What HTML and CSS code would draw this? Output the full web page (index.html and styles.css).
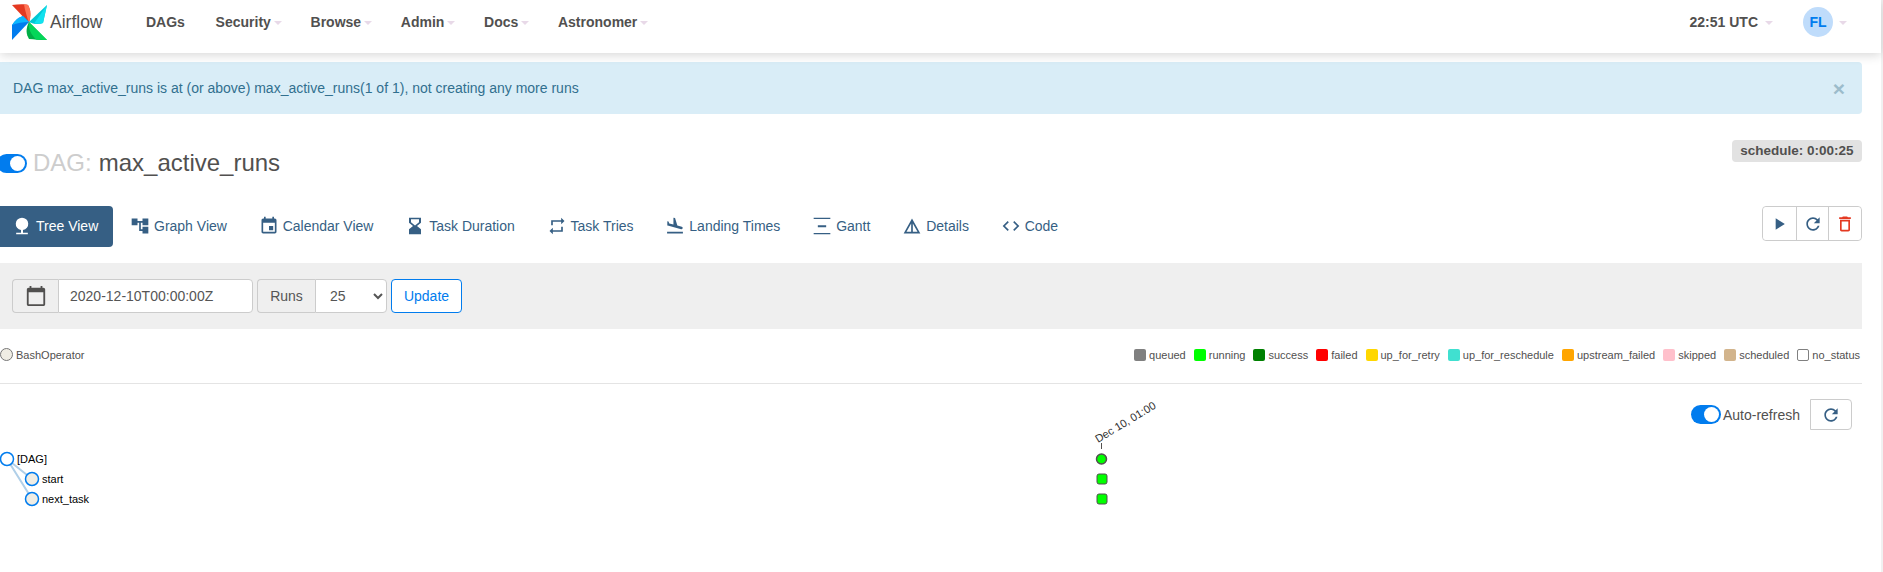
FILE: index.html
```html
<!DOCTYPE html>
<html lang="en">
<head>
<meta charset="utf-8">
<title>max_active_runs - Tree - Airflow</title>
<link rel="stylesheet" href="styles.css">
</head>
<body>
<div class="page">
  <nav class="nav">
    <a class="brand">
      <svg class="logo" viewBox="0 0 36 36" aria-hidden="true">
        <path fill="#e43921" d="M0 1 C6 0 14 0 16 1 C19 6 19 12 17 19 Z"/>
        <path fill="#ff7557" d="M12 .6 C14 .6 15 .7 16 1 C19 6 19 12 17 19 C15 13 13 7 12 .6 Z"/>
        <path fill="#00c7d4" d="M35 1 L31 19 C26 21 21 20 17 18 Z"/>
        <path fill="#11e1ee" d="M35 1 L31 19 C28 20 25 20 22 19.500 Z"/>
        <path fill="#00ad46" d="M35 36 C28 36 22 35.500 17 35 C14 30 13.500 25 17 18 Z"/>
        <path fill="#04d659" d="M35 36 C31 36 27 35.800 24 35.500 C19 30 16 25 17 18 Z"/>
        <path fill="#017cee" d="M0 36 L0 21 C3 16 7 13 11 12 C13 14 15 16 17 18 Z"/>
        <path fill="#0cb6ff" d="M0 21 C3 16 7 13 11 12 C13 14 15 16 17 18 C11 18 5 19 0 21 Z"/>
      </svg>
      <span class="brand-name">Airflow</span>
    </a>
    <ul class="menu">
      <li class="menu-item menu-first">DAGs</li>
      <li class="menu-item">Security<i class="caret"></i></li>
      <li class="menu-item">Browse<i class="caret"></i></li>
      <li class="menu-item">Admin<i class="caret"></i></li>
      <li class="menu-item">Docs<i class="caret"></i></li>
      <li class="menu-item">Astronomer<i class="caret"></i></li>
    </ul>
    <div class="nav-right">
      <span class="clock">22:51 UTC<i class="caret caret-wide"></i></span>
      <span class="user"><span class="avatar">FL</span><i class="caret caret-wide"></i></span>
    </div>
  </nav>

  <main class="content">
    <div class="alert">
      <span>DAG max_active_runs is at (or above) max_active_runs(1 of 1), not creating any more runs</span>
      <span class="alert-close">×</span>
    </div>

    <div class="title-row">
      <h4 class="title">
        <span class="switch"></span>
        <span class="title-label">DAG:</span>
        <span>max_active_runs</span>
      </h4>
      <span class="schedule">schedule: 0:00:25</span>
    </div>

    <div class="tabs-row">
      <div class="tabs">
        <a class="tab tab-active"><svg class="icon" viewBox="0 0 24 24"><path d="M12 2a7.5 7.5 0 0 0-1.2 14.9V20H5v2h14v-2h-5.800v-3.100A7.500 7.500 0 0 0 12 2z"/></svg>Tree View</a>
        <a class="tab"><svg class="icon" viewBox="0 0 24 24"><path d="M22 11V3h-7v3H9V3H2v8h7V8h2v10h4v3h7v-8h-7v3h-2V8h2v3z"/></svg>Graph View</a>
        <a class="tab"><svg class="icon" viewBox="0 0 24 24"><path d="M17 12h-5v5h5v-5zM16 1v2H8V1H6v2H5c-1.110 0-1.990.9-1.990 2L3 19c0 1.100.89 2 2 2h14c1.100 0 2-.9 2-2V5c0-1.100-.9-2-2-2h-1V1h-2zm3 18H5V8h14v11z"/></svg>Calendar View</a>
        <a class="tab"><svg class="icon" viewBox="2 0 20 24" preserveAspectRatio="none"><path d="M18 22l-.01-6L14 12l3.990-4.010L18 2H6v6l4 4-4 3.990V22h12zM8 7.500V4h8v3.500l-4 4-4-4z"/></svg>Task Duration</a>
        <a class="tab"><svg class="icon" viewBox="0 0 24 24"><path d="M7 7h10v3l4-4-4-4v3H5v6h2V7zm10 10H7v-3l-4 4 4 4v-3h12v-6h-2v4z"/></svg>Task Tries</a>
        <a class="tab"><svg class="icon" viewBox="0 0 24 24"><path d="M2.500 19h19v2h-19zm7.180-5.730l4.350 1.160 5.310 1.420c.8.21 1.620-.26 1.840-1.060.21-.8-.26-1.620-1.060-1.840l-5.310-1.420-2.760-9.020L10.120 2v8.280L5.150 8.950l-.93-2.320-1.450-.39v5.170l1.600.43 5.310 1.430z"/></svg>Landing Times</a>
        <a class="tab"><svg class="icon" viewBox="0 0 24 24"><path d="M2 2h20v1.500H2zM2 20.500h20V22H2zM7 11h10v2.500H7z"/></svg>Gantt</a>
        <a class="tab"><svg class="icon" viewBox="0 0 24 24"><path d="M12 3L2 21h20L12 3zm1 5.920L18.600 19H13V8.920zm-2 0V19H5.400L11 8.920z"/></svg>Details</a>
        <a class="tab"><svg class="icon" viewBox="0 0 24 24"><path d="M9.400 16.600L4.800 12l4.600-4.600L8 6l-6 6 6 6 1.400-1.400zm5.200 0l4.600-4.600-4.600-4.600L16 6l6 6-6 6-1.400-1.400z"/></svg>Code</a>
      </div>
      <div class="actions">
        <button class="action"><svg class="icon" viewBox="0 0 24 24"><path d="M8 5v14l11-7z"/></svg></button>
        <button class="action"><svg class="icon" viewBox="0 0 24 24"><path d="M17.650 6.350C16.200 4.900 14.210 4 12 4c-4.420 0-7.990 3.580-7.990 8s3.570 8 7.990 8c3.730 0 6.840-2.550 7.730-6h-2.080c-.82 2.330-3.040 4-5.650 4-3.310 0-6-2.690-6-6s2.690-6 6-6c1.660 0 3.140.69 4.220 1.780L13 11h7V4l-2.350 2.350z"/></svg></button>
        <button class="action action-danger"><svg class="icon" viewBox="0 0 24 24"><path d="M6 19c0 1.100.9 2 2 2h8c1.100 0 2-.9 2-2V7H6v12zM8 9h8v10H8V9zm7.500-5l-1-1h-5l-1 1H5v2h14V4h-3.500z"/></svg></button>
      </div>
    </div>

    <form class="filter">
      <div class="group">
        <span class="addon addon-icon"><svg class="cal" viewBox="0 0 24 24"><path d="M20 3h-1V1h-2v2H7V1H5v2H4c-1.100 0-2 .9-2 2v16c0 1.100.9 2 2 2h16c1.100 0 2-.9 2-2V5c0-1.100-.9-2-2-2zm0 18H4V8h16v13z"/></svg></span>
        <input class="field field-date" type="text" value="2020-12-10T00:00:00Z">
      </div>
      <div class="group">
        <span class="addon addon-runs">Runs</span>
        <select class="field field-select"><option>25</option></select>
      </div>
      <button class="update" type="button">Update</button>
    </form>

    <div class="legend-row">
      <div class="op"><span class="op-dot"></span>BashOperator</div>
      <ul class="legend">
        <li class="legend-item"><span class="sw sw-queued"></span>queued</li>
        <li class="legend-item"><span class="sw sw-running"></span>running</li>
        <li class="legend-item"><span class="sw sw-success"></span>success</li>
        <li class="legend-item"><span class="sw sw-failed"></span>failed</li>
        <li class="legend-item"><span class="sw sw-retry"></span>up_for_retry</li>
        <li class="legend-item"><span class="sw sw-resched"></span>up_for_reschedule</li>
        <li class="legend-item"><span class="sw sw-upstream"></span>upstream_failed</li>
        <li class="legend-item"><span class="sw sw-skipped"></span>skipped</li>
        <li class="legend-item"><span class="sw sw-scheduled"></span>scheduled</li>
        <li class="legend-item"><span class="sw sw-none"></span>no_status</li>
      </ul>
    </div>

    <section class="chart">
      <svg class="tree" viewBox="0 384 1862 188" width="1862" height="188">
        <path class="link" d="M7 459 L32 479 M7 459 L32 499"/>
        <circle class="node node-dag" cx="7" cy="459" r="6.500"/>
        <circle class="node" cx="32" cy="479" r="6.500"/>
        <circle class="node" cx="32" cy="499" r="6.500"/>
        <text class="label" x="17" y="463">[DAG]</text>
        <text class="label" x="42" y="483">start</text>
        <text class="label" x="42" y="503">next_task</text>
        <text class="label label-date" x="1098" y="443" transform="rotate(-31 1098 443)">Dec 10, 01:00</text>
        <path class="tick" d="M1101.500 443 V449"/>
        <circle class="run" cx="1101.500" cy="459" r="5"/>
        <rect class="inst" x="1097" y="474" width="10" height="10" rx="2"/>
        <rect class="inst" x="1097" y="494" width="10" height="10" rx="2"/>
      </svg>
      <div class="refresh-row">
        <span class="switch"></span>
        <span class="refresh-label">Auto-refresh</span>
        <button class="action refresh-btn"><svg class="icon" viewBox="0 0 24 24"><path d="M17.650 6.350C16.200 4.900 14.210 4 12 4c-4.420 0-7.990 3.580-7.990 8s3.570 8 7.990 8c3.730 0 6.840-2.550 7.730-6h-2.080c-.82 2.330-3.040 4-5.650 4-3.310 0-6-2.690-6-6s2.690-6 6-6c1.660 0 3.140.69 4.220 1.780L13 11h7V4l-2.350 2.350z"/></svg></button>
      </div>
    </section>
  </main>
</div>
<div class="edge"></div>
</body>
</html>
```
FILE: styles.css
```css
* { box-sizing: border-box; }
html, body { margin: 0; padding: 0; height: 572px; overflow: hidden; }
body {
  display: flex;
  font-family: "Liberation Sans", Arial, sans-serif;
  font-size: 14px;
  color: #51504f;
  background: #fff;
}
.page { width: 1881px; flex: none; }
.edge { width: 2px; flex: none; background: #f1f1f1; }

.nav {
  display: flex;
  align-items: center;
  height: 53px;
  padding-bottom: 9px;
  background: #fff;
  box-shadow: 0 2px 10px rgba(0, 0, 0, .16);
  position: relative;
}
.brand { display: flex; align-items: center; margin-left: 12px; width: 134px; flex: none; }
.logo { width: 36px; height: 36px; flex: none; }
.brand-name { margin-left: 2px; font-size: 17.500px; color: #51504f; }
.menu { display: flex; gap: 28.700px; list-style: none; margin: 0; padding: 0; flex: 1; }
.menu-item { display: flex; align-items: center; font-weight: 700; white-space: nowrap; }
.menu-first { margin-right: 2px; }
.caret {
  display: inline-block;
  width: 0;
  height: 0;
  margin-left: 3px;
  margin-top: 2px;
  border-left: 4px solid transparent;
  border-right: 4px solid transparent;
  border-top: 4px solid #e8d9e8;
}
.caret-wide { margin-left: 7px; }
.nav-right { display: flex; align-items: center; margin-right: 34px; }
.clock { display: flex; align-items: center; font-weight: 700; }
.user { display: flex; align-items: center; margin-left: 30px; }
.user .caret-wide { margin-left: 6px; }
.avatar {
  display: flex;
  align-items: center;
  justify-content: center;
  width: 30px;
  height: 30px;
  border-radius: 50%;
  background: #bfdcfb;
  color: #017cee;
  font-weight: 700;
}

.content { width: 1862px; }
.alert {
  display: flex;
  align-items: center;
  justify-content: space-between;
  height: 52px;
  margin-top: 9px;
  padding: 0 17px 0 13px;
  background: #d9edf7;
  border-radius: 0 4px 4px 0;
  color: #31708f;
}
.alert-close { font-size: 21px; font-weight: 700; color: #9cbccb; line-height: 1; }

.title-row {
  display: flex;
  justify-content: space-between;
  align-items: flex-start;
  margin-top: 26px;
  margin-bottom: 20px;
}
.title {
  display: flex;
  align-items: center;
  gap: 6px;
  height: 46px;
  margin: 0 0 0 -3px;
  font-size: 24px;
  font-weight: 400;
  color: #51504f;
}
.title-label { color: #cdcdcd; margin-right: 1px; }
.switch {
  display: inline-block;
  position: relative;
  flex: none;
  width: 30px;
  height: 19px;
  border-radius: 10px;
  background: #017cee;
}
.switch::after {
  content: "";
  position: absolute;
  top: 2px;
  right: 2px;
  width: 15px;
  height: 15px;
  border-radius: 50%;
  background: #fff;
}
.schedule {
  display: block;
  height: 22px;
  padding: 0 8.500px;
  border-radius: 4px;
  background: #e2e2e2;
  font-size: 13.500px;
  font-weight: 700;
  line-height: 22px;
  white-space: nowrap;
}

.tabs-row {
  display: flex;
  justify-content: space-between;
  align-items: flex-start;
  margin-bottom: 16px;
}
.tabs { display: flex; gap: 1.750px; margin-left: -3px; }
.tab {
  display: flex;
  align-items: center;
  gap: 4px;
  height: 41px;
  padding: 0 15px 1px;
  border-radius: 4px;
  color: #365f84;
  white-space: nowrap;
}
.tab-active { background: #365f84; color: #fff; }
.icon { width: 20px; height: 20px; fill: currentColor; flex: none; }
.actions { display: flex; height: 35px; border: 1px solid #ccc; border-radius: 4px; }
.action {
  display: flex;
  align-items: center;
  justify-content: center;
  width: 32.670px;
  padding: 0;
  border: 0;
  border-left: 1px solid #ccc;
  background: #fff;
  color: #365f84;
}
.action:first-child { border-left: 0; border-radius: 4px 0 0 4px; }
.action:last-child { border-radius: 0 4px 4px 0; }
.action-danger { color: #e43921; }

.filter {
  display: flex;
  gap: 4px;
  padding: 16px 12px;
  height: 66px;
  background: #efefef;
}
.group { display: flex; height: 34px; }
.addon {
  display: flex;
  align-items: center;
  justify-content: center;
  background: #efefef;
  border: 1px solid #ccc;
  border-right: 0;
  border-radius: 4px 0 0 4px;
  color: #555;
}
.addon-icon { width: 46px; }
.addon-runs { width: 58px; }
.cal { width: 22px; height: 22px; fill: #51504f; }
.field {
  height: 34px;
  margin: 0;
  border: 1px solid #ccc;
  border-radius: 0 4px 4px 0;
  background: #fff;
  color: #555;
  font-family: inherit;
  font-size: 14px;
}
.field-date { width: 195px; padding: 0 11px; }
.field-select { width: 72px; padding: 0 10px; }
.update {
  width: 71px;
  height: 34px;
  padding: 0;
  border: 1px solid #017cee;
  border-radius: 4px;
  background: #fff;
  color: #017cee;
  font-family: inherit;
  font-size: 14px;
}

.legend-row {
  display: flex;
  justify-content: space-between;
  align-items: center;
  height: 55px;
  padding: 0 2px 3px 0;
  border-bottom: 1px solid #e4e4e4;
  font-size: 11px;
}
.op { display: flex; align-items: center; gap: 3px; }
.op-dot {
  flex: none;
  width: 13px;
  height: 13px;
  border: 1px solid #777;
  border-radius: 50%;
  background: #f0ede4;
}
.legend { display: flex; gap: 8px; list-style: none; margin: 0; padding: 0; }
.legend-item { display: flex; align-items: center; gap: 3px; white-space: nowrap; }
.sw { width: 12px; height: 12px; border-radius: 2px; border: 1px solid transparent; }
.sw-queued { background: #808080; }
.sw-running { background: #00ff00; }
.sw-success { background: #008000; }
.sw-failed { background: #ff0000; }
.sw-retry { background: #ffd700; }
.sw-resched { background: #40e0d0; }
.sw-upstream { background: #ffa500; }
.sw-skipped { background: #ffc0cb; }
.sw-scheduled { background: #d2b48c; }
.sw-none { background: #fff; border-color: #808080; }

.chart { position: relative; height: 188px; }
.tree { position: absolute; left: 0; top: 0; }
.link { fill: none; stroke: #b0cfe8; stroke-width: 2; }
.node { fill: #f0ede4; stroke: #017cee; stroke-width: 1.500; }
.node-dag { fill: #fff; }
.label { font-size: 11px; fill: #000; }
.label-date { fill: #333; }
.tick { stroke: #51504f; stroke-width: 1; }
.run { fill: #00ff00; stroke: #51504f; stroke-width: 1.500; }
.inst { fill: #00ff00; stroke: #51504f; stroke-width: 1; }
.refresh-row {
  position: relative;
  display: flex;
  justify-content: flex-end;
  align-items: center;
  padding: 15px 10px 0 0;
}
.refresh-label { margin: 0 10px 0 2px; }
.refresh-btn {
  width: 42px;
  height: 31px;
  border: 1px solid #ccc;
  border-radius: 4px;
}
.refresh-btn:first-child { border-left: 1px solid #ccc; }
```
